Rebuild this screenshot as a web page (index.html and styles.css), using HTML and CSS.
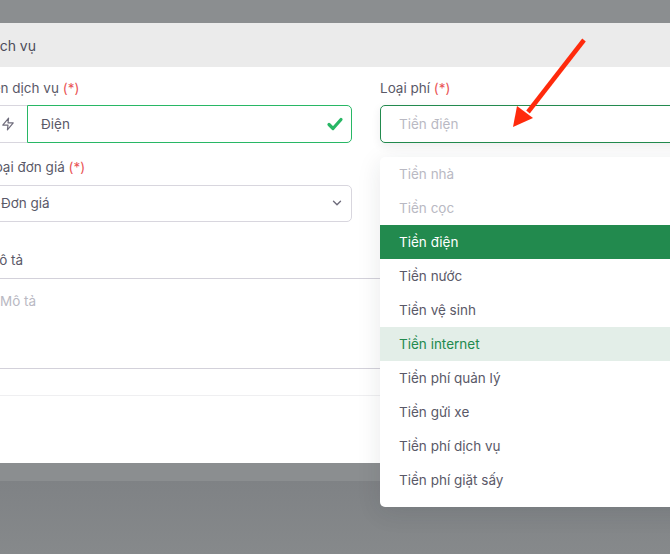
FILE: index.html
```html
<!DOCTYPE html>
<html lang="vi">
<head>
<meta charset="utf-8">
<title>Dịch vụ</title>
<link rel="stylesheet" href="styles.css">
</head>
<body>
<div class="page">
  <div class="backdrop-band"></div>
  <section class="modal">
    <header class="modal-head">Thêm dịch vụ</header>
    <div class="modal-body">
      <div class="grid">
        <div class="field">
          <label class="label label-shift">Tên dịch vụ <span class="req">(*)</span></label>
          <div class="group">
            <span class="addon">
              <svg width="14" height="14" viewBox="0 0 24 24" fill="none" stroke="#6e6b7b" stroke-width="2" stroke-linecap="round" stroke-linejoin="round"><polygon points="13 2 3 14 12 14 11 22 21 10 12 10 13 2"/></svg>
            </span>
            <div class="input valid">
              <span>Điện</span>
              <svg class="check" width="18" height="18" viewBox="0 0 18 18" fill="none" stroke="#28b765" stroke-width="3.2" stroke-linecap="round" stroke-linejoin="round"><path d="M3 9.5 7 13.5 15 4.5"/></svg>
            </div>
          </div>
        </div>
        <div class="field">
          <label class="label">Loại phí <span class="req">(*)</span></label>
          <div class="input focus"><span class="ph">Tiền điện</span></div>
        </div>
        <div class="field">
          <label class="label label-low">Loại đơn giá <span class="req">(*)</span></label>
          <div class="input select">
            <span>Đơn giá</span>
            <svg width="14" height="14" viewBox="0 0 24 24" fill="none" stroke="#6e6b7b" stroke-width="2.4" stroke-linecap="round" stroke-linejoin="round"><polyline points="6 9 12 15 18 9"/></svg>
          </div>
        </div>
      </div>
      <div class="desc">
        <div class="desc-label">Mô tả</div>
        <div class="desc-area">Mô tả</div>
      </div>
      <div class="rule"></div>
    </div>
  </section>
  <ul class="menu">
    <li class="opt off">Tiền nhà</li>
    <li class="opt off">Tiền cọc</li>
    <li class="opt sel">Tiền điện</li>
    <li class="opt">Tiền nước</li>
    <li class="opt">Tiền vệ sinh</li>
    <li class="opt hov">Tiền internet</li>
    <li class="opt">Tiền phí quản lý</li>
    <li class="opt">Tiền gửi xe</li>
    <li class="opt">Tiền phí dịch vụ</li>
    <li class="opt">Tiền phí giặt sấy</li>
  </ul>
  <svg class="arrow" width="90" height="100" viewBox="0 0 90 100" fill="none">
    <path d="M78 5 22 77" stroke="#ff2a0c" stroke-width="4.5"/>
    <path d="M7 92 11 71 27 83Z" fill="#ff2a0c"/>
  </svg>
</div>
</body>
</html>
```
FILE: styles.css
```css
* { box-sizing: border-box; }
html, body { margin: 0; padding: 0; }
body {
  width: 670px;
  height: 554px;
  overflow: hidden;
  font-family: Inter, "Liberation Sans", sans-serif;
  font-size: 13.5px;
  color: #5a5968;
}
.page {
  position: relative;
  width: 670px;
  height: 554px;
  overflow: hidden;
  padding-top: 23px;
  background: linear-gradient(#7f8285 481px, #86898b 554px);
}
.backdrop-band {
  position: absolute;
  left: 0;
  top: 0;
  width: 100%;
  height: 481px;
  background: #8b8e90;
}
.modal {
  position: relative;
  width: 800px;
  height: 440px;
  margin-left: -40px;
  background: #fff;
}
.modal-head {
  height: 44px;
  padding-top: 1px;
  line-height: 44px;
  background: #ebebeb;
  color: #4d4c5a;
  font-size: 14px;
  text-indent: -14px;
}
.modal-body { padding: 11px 0 0 27px; }
.grid {
  display: grid;
  grid-template-columns: 365px 365px;
  column-gap: 28px;
  row-gap: 14px;
}
.label {
  display: block;
  height: 20px;
  line-height: 20px;
  margin-bottom: 7px;
}
.label-shift { margin-left: -2px; }
.label-low { margin-bottom: 8px; }
.req { color: #ea5455; }
.group { display: flex; height: 38px; }
.addon {
  display: flex;
  align-items: center;
  justify-content: center;
  flex: 0 0 40px;
  border: 1px solid #d8d6de;
  border-right: 0;
  border-radius: 5px 0 0 5px;
}
.input {
  display: flex;
  align-items: center;
  justify-content: space-between;
  height: 38px;
  padding: 0 13px;
  border: 1px solid #d8d6de;
  border-radius: 5px;
  background: #fff;
}
.group .input { flex: 1; }
.valid { border-color: #28b765; border-radius: 0 5px 5px 0; }
.check { margin-right: -6px; }
.focus {
  padding-left: 18px;
  border-color: #228a4e;
  box-shadow: 0 3px 10px rgba(34, 41, 47, 0.08);
}
.ph, .desc-area { color: #b9b9c3; }
.select { height: 37px; padding-bottom: 1px; }
.select svg { margin-right: -6px; }
.desc { margin-top: 28px; }
.desc-label {
  height: 29px;
  line-height: 20px;
  border-bottom: 1px solid #d3d1da;
}
.desc-area {
  height: 90px;
  padding: 12px 13px 0;
  line-height: 20px;
  border-bottom: 1px solid #d3d1da;
}
.rule { height: 27px; border-bottom: 1px solid #efeff1; }
.menu {
  position: absolute;
  left: 380px;
  top: 157px;
  width: 365px;
  margin: 0;
  padding: 0 0 10px;
  list-style: none;
  background: #fff;
  border-radius: 5px;
  box-shadow: 0 5px 25px rgba(34, 41, 47, 0.1);
}
.opt {
  height: 34px;
  line-height: 34px;
  padding-left: 19px;
}
.off { color: #b9b9c3; }
.sel { background: #228a4e; color: #fff; }
.hov { background: #e3eee8; color: #228a4e; }
.arrow {
  position: absolute;
  left: 506px;
  top: 35px;
}
```
